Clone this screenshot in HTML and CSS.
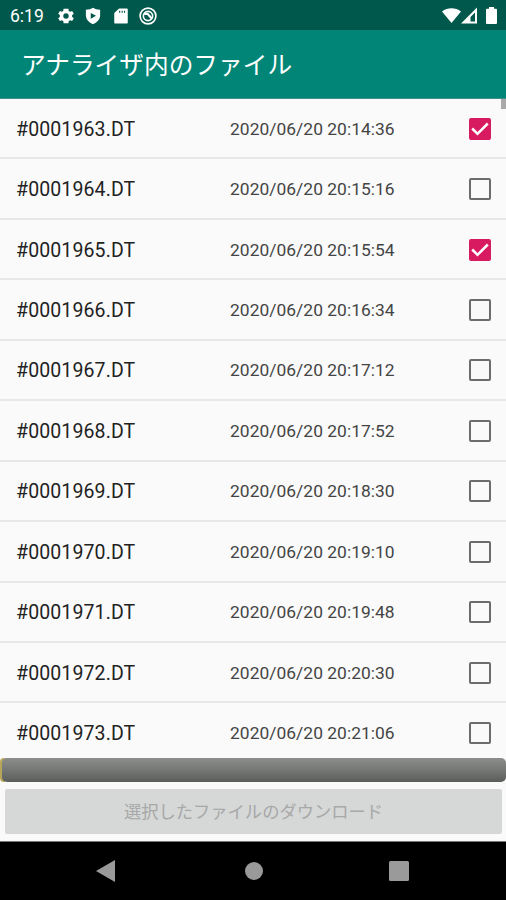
FILE: index.html
```html
<!DOCTYPE html>
<html lang="ja">
<head>
    <meta charset="UTF-8">
    <meta name="viewport" content="width=device-width, initial-scale=1.0">
    <title>アナライザ内のファイル</title>
    <link rel="stylesheet" href="styles.css">
</head>
<body>
    <div class="screen">
        <div class="status-bar">
            <span class="clock">6:19</span>
            <div class="status-left">
                <!-- settings -->
                <svg width="18" height="18" viewBox="1 1 22 22"><path fill="#fff" fill-rule="evenodd" d="M19.4 13a7.500 7.500 0 0 0 0-2l2.100-1.600-2-3.500-2.500 1a7.300 7.300 0 0 0-1.700-1L15 3H9l-.4 2.900a7.300 7.300 0 0 0-1.700 1l-2.400-1-2 3.500L4.600 11a7.500 7.500 0 0 0 0 2l-2.100 1.600 2 3.500 2.500-1a7.300 7.300 0 0 0 1.700 1L9 21h6l.4-2.900a7.300 7.300 0 0 0 1.700-1l2.400 1 2-3.500zM12 15.300a3.300 3.300 0 1 1 0-6.600 3.300 3.300 0 0 1 0 6.600z"/></svg>
                <!-- play protect -->
                <svg width="18" height="18" viewBox="0 0 24 24"><path fill="#fff" fill-rule="evenodd" d="M12 1c2.500 1.700 5.500 2.600 9.500 2.700V11c0 5.500-4.300 10-9.500 12-5.200-2-9.500-6.500-9.500-12V3.700C6.500 3.600 9.500 2.700 12 1zM9 8v7.500l7-3.800z"/></svg>
                <!-- sd card -->
                <svg width="18" height="18" viewBox="0 0 24 24"><path fill="#fff" fill-rule="evenodd" d="M19.500 2H9.500L3 8v12.500c0 1 .6 1.500 1.500 1.500h15c1 0 1.500-.6 1.500-1.500v-17c0-1-.5-1.500-1.500-1.500zM9.500 5H11v2.500H9.500zm3.300 0h1.500v2.500h-1.500zM16 5h1.500v2.500H16z"/></svg>
                <!-- ringed circle with a slanted band -->
                <svg width="18" height="18" viewBox="0 0 24 24"><g fill="none" stroke="#fff"><circle cx="12" cy="12" r="10.500" stroke-width="2.200"/><circle cx="12" cy="12" r="6.200" stroke-width="2.200"/><path stroke-width="3" d="M7 9h4.500l5.500 6.500"/></g></svg>
            </div>
            <div class="status-right">
                <svg width="19" height="17" viewBox="0 0 19 17"><path fill="#fff" d="M0 4.500C5.500.2 13.500.2 19 4.500L9.500 16z"/></svg>
                <svg width="17" height="17" viewBox="0 0 17 17"><path fill="#fff" fill-rule="evenodd" d="M0 16.500L16 .5v16zM9.500 14.500H14V5.500L9.500 10z"/></svg>
                <svg class="battery" width="11" height="17" viewBox="0 0 11 17"><path fill="#fff" d="M3 0h5v1.800h2q1 0 1 1V16q0 1-1 1H1q-1 0-1-1V2.800q0-1 1-1h2z"/></svg>
            </div>
        </div>

        <div class="app-bar"><h1>アナライザ内のファイル</h1></div>

        <div class="file-list">
            <div class="row"><span class="name">#0001963.DT</span><span class="date">2020/06/20 20:14:36</span><span class="box checked"><svg viewBox="0 0 22 22"><path d="M3.200 10.500l5.300 5.300L18.800 5.500"/></svg></span></div>
            <div class="row"><span class="name">#0001964.DT</span><span class="date">2020/06/20 20:15:16</span><span class="box"></span></div>
            <div class="row"><span class="name">#0001965.DT</span><span class="date">2020/06/20 20:15:54</span><span class="box checked"><svg viewBox="0 0 22 22"><path d="M3.200 10.500l5.300 5.300L18.800 5.500"/></svg></span></div>
            <div class="row"><span class="name">#0001966.DT</span><span class="date">2020/06/20 20:16:34</span><span class="box"></span></div>
            <div class="row"><span class="name">#0001967.DT</span><span class="date">2020/06/20 20:17:12</span><span class="box"></span></div>
            <div class="row"><span class="name">#0001968.DT</span><span class="date">2020/06/20 20:17:52</span><span class="box"></span></div>
            <div class="row"><span class="name">#0001969.DT</span><span class="date">2020/06/20 20:18:30</span><span class="box"></span></div>
            <div class="row"><span class="name">#0001970.DT</span><span class="date">2020/06/20 20:19:10</span><span class="box"></span></div>
            <div class="row"><span class="name">#0001971.DT</span><span class="date">2020/06/20 20:19:48</span><span class="box"></span></div>
            <div class="row"><span class="name">#0001972.DT</span><span class="date">2020/06/20 20:20:30</span><span class="box"></span></div>
            <div class="row"><span class="name">#0001973.DT</span><span class="date">2020/06/20 20:21:06</span><span class="box"></span></div>
            <div class="scroll-thumb"></div>
        </div>

        <div class="progress"><div class="progress-track"></div></div>

        <div class="footer">
            <button class="download" disabled>選択したファイルのダウンロード</button>
        </div>

        <div class="nav-bar">
            <svg width="19" height="22" viewBox="0 0 19 22"><path fill="#9a9a9a" d="M19 0v22L0 11z"/></svg>
            <svg class="home" width="18" height="18" viewBox="0 0 18 18"><circle cx="9" cy="9" r="9" fill="#9a9a9a"/></svg>
            <svg width="20" height="20" viewBox="0 0 20 20"><rect width="20" height="20" rx="1.500" fill="#9a9a9a"/></svg>
        </div>
    </div>
</body>
</html>
```
FILE: styles.css
```css
* {
    margin: 0;
    padding: 0;
    box-sizing: border-box;
}

body {
    font-family: Roboto, "Noto Sans CJK JP", sans-serif;
    background: #fafafa;
    overflow: hidden;
}

svg {
    display: block;
}

.screen {
    display: flex;
    flex-direction: column;
    width: 506px;
    height: 900px;
}

.status-bar {
    display: flex;
    align-items: center;
    height: 30px;
    padding: 1px 9px 0 10px;
    background: #00574b;
    color: #fff;
}

.clock {
    width: 47px;
    font-size: 17.5px;
}

.status-left {
    display: flex;
    gap: 9.3px;
}

.status-right {
    display: flex;
    margin-left: auto;
}

.status-right .battery {
    margin-left: 8px;
}

.app-bar {
    display: flex;
    align-items: center;
    height: 69px;
    padding: 4px 0 0 21px;
    background: #008577;
    border-bottom: 1px solid #3f8f86;
}

.app-bar h1 {
    color: #fff;
    font-size: 24.7px;
    font-weight: 400;
    line-height: 36px;
}

.file-list {
    position: relative;
    height: 659px;
    overflow: hidden;
}

.row {
    display: flex;
    align-items: center;
    height: 60.45px;
    padding: 1px 15px 0 16px;
    border-bottom: 2px solid #e8e8e8;
}

.name {
    width: 214px;
    padding-top: 1px;
    color: #222;
    font-size: 19.5px;
    letter-spacing: 0.12px;
}

.date {
    color: #444;
    font-size: 17.4px;
    letter-spacing: 0.04px;
}

.box {
    width: 22px;
    height: 22px;
    margin-left: auto;
    border: 2px solid #6c6c6c;
    border-radius: 2px;
}

.box.checked {
    background: #d81b60;
    border: none;
}

.box path {
    fill: none;
    stroke: #fff;
    stroke-width: 2.5;
}

/* scroll position indicator, drawn over the rows */
.scroll-thumb {
    position: absolute;
    top: 0;
    right: 0;
    width: 5px;
    height: 10px;
    background: #aaa;
}

.progress {
    height: 24px;
    background: linear-gradient(to right, #b8a55c 5px, transparent 5px);
    border-radius: 4px;
}

.progress-track {
    height: 24px;
    margin-left: 2px;
    border-radius: 5px;
    background: linear-gradient(#8b8e8a, #747773 50%, #5a5d59);
}

.footer {
    height: 60px;
    padding: 7px 4px 0 5px;
    border-bottom: 1px solid #777;
}

.download {
    display: block;
    width: 100%;
    height: 45px;
    padding-bottom: 2px;
    border: none;
    border-radius: 2px;
    background: #d6d7d7;
    color: #a7a8a8;
    font-family: inherit;
    font-size: 17.3px;
}

.nav-bar {
    display: flex;
    flex: 1;
    align-items: center;
    justify-content: space-between;
    padding: 0 97px 0 96px;
    background: #000;
}

.nav-bar .home {
    margin-left: 3px;
}
```
